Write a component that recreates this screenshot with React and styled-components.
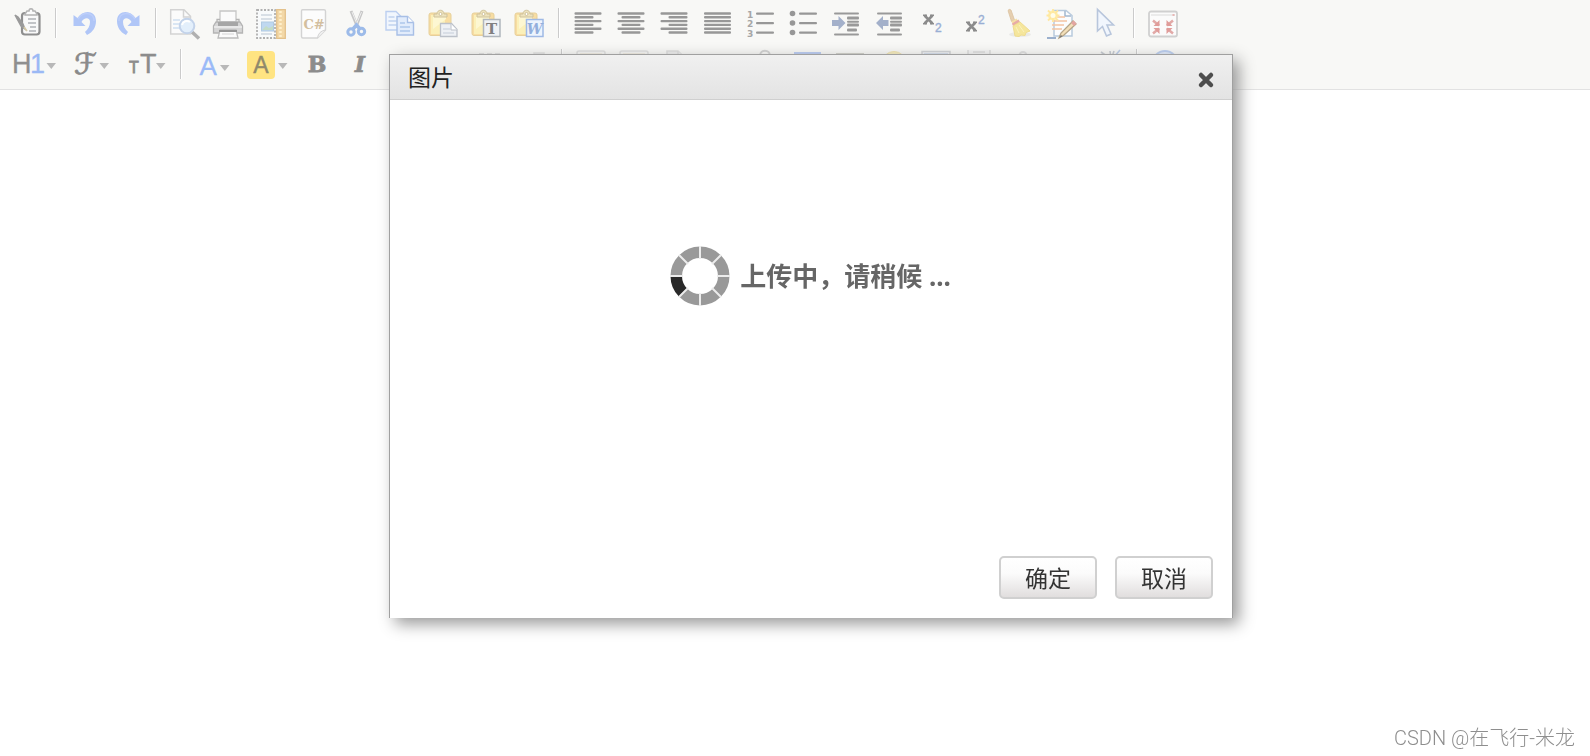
import React, { useState } from "react";
import styled, { createGlobalStyle, css } from "styled-components";

const GlobalStyle = createGlobalStyle`
  * {
    box-sizing: border-box;
  }

  body {
    margin: 0;
    background: #fff;
    font-family: "Noto Sans", "Noto Sans CJK SC", sans-serif;
  }
`;

const EditorBlock = styled.div`
  min-height: 100vh;
  display: flex;
  flex-direction: column;
`;

const Toolbar = styled.div`
  display: flex;
  flex-direction: column;
  gap: 11px;
  padding: 8px 13px 10px;
  background: #f8f8f6;
  border-bottom: 1px solid #e2e2e2;
`;

const ToolRow = styled.div`
  display: flex;
  height: 30px;
`;

const ToolGroup = styled.div`
  display: flex;
  gap: 13px;
`;

const Separator = styled.div`
  width: 2px;
  height: 30px;
  margin: 0 13px 0 12px;
  background: #fff;
  border-left: 1px solid #cbcbcb;

  ${(props) =>
    props.$wide &&
    css`
      margin: 0 13px 0 14px;
    `}
`;

const ToolButton = styled.button`
  display: block;
  height: 30px;
  padding: 0;
  border: 0;
  background: none;
  cursor: pointer;
`;

const Icon = styled.svg`
  display: block;
  overflow: visible;
`;

const EditArea = styled.textarea`
  flex: 1;
  width: 100%;
  padding: 10px;
  border: 0;
  outline: 0;
  resize: none;
  background: #fff;
`;

const Overlay = styled.div`
  position: fixed;
  inset: 0;
  display: flex;
  justify-content: center;
  align-items: flex-start;
  padding: 54px 0 0 32px;
`;

const Dialog = styled.div`
  width: 844px;
  max-width: 100%;
  background: #fff;
  border: 1px solid #a0a0a0;
  border-bottom: 0;
  box-shadow: 6px 6px 15px #999;
`;

const DialogHeader = styled.div`
  display: flex;
  align-items: center;
  justify-content: space-between;
  height: 45px;
  padding: 0 18px;
  background: linear-gradient(#f0f0f0, #e3e3e3);
  border-bottom: 1px solid #cfcfcf;
`;

const DialogTitle = styled.h2`
  margin: 0;
  font-size: 23px;
  line-height: 32px;
  font-weight: 400;
  color: #222;
`;

const CloseButton = styled.button`
  display: block;
  margin-top: 6px;
  padding: 0;
  border: 0;
  background: none;
  cursor: pointer;
`;

const DialogBody = styled.div`
  display: flex;
  justify-content: center;
  height: 456px;
  padding-top: 147px;
`;

const Loading = styled.div`
  display: flex;
  align-items: center;
  gap: 11px;
  height: 58px;
  font-size: 26px;
  font-weight: 700;
  line-height: 36px;
  color: #666;
`;

const DialogFooter = styled.div`
  display: flex;
  justify-content: flex-end;
  gap: 18px;
  padding: 0 19px 19px;
`;

const FooterButton = styled.button`
  width: 98px;
  height: 43px;
  padding: 0;
  border: 2px solid #d0d0d0;
  border-radius: 5px;
  background: linear-gradient(#fff, #fbfbfb 40%, #e1dede);
  font-family: inherit;
  font-size: 23px;
  line-height: 32px;
  color: #333;
  cursor: pointer;
`;

const Watermark = styled.div`
  position: fixed;
  right: 15px;
  bottom: 4px;
  font-family: Roboto, "Noto Sans CJK SC", sans-serif;
  font-size: 20px;
  font-weight: 300;
  line-height: 28px;
  color: #8e8e8e;
`;

const SANS = "Liberation Sans, sans-serif";
const SERIF = "DejaVu Serif, serif";

const Caret = ({ x, y = 14 }) => (
  <path d={`M${x} ${y}h9.5l-4.7 6z`} fill="#b8b8b8" />
);

// horizontal rules of the alignment icons: [x, width] per line
const Lines = ({ rows }) => (
  <g fill="#979797">
    {rows.map(([x, w], i) => (
      <rect key={i} x={x} y={4.3 + i * 3.8} width={w} height="2.4" rx="1" />
    ))}
  </g>
);

const UndoPath = () => (
  <g>
    <path d="M3.500 7v11h12l-4-4C14 9 20 9 20 14c0 4-2 7-5 10l2 3c6-3 9-8 9-14C26 2 13 1 7.500 10z" fill="#b0c6f7" />
    <path d="M8 11C13 3 24 4 24 13" fill="none" stroke="#bccefa" strokeWidth="1.5" />
  </g>
);

const PasteBase = () => (
  <g>
    <rect x="1" y="5" width="22" height="22.500" rx="2" fill="#f8dda2" stroke="#e6d09a" />
    <path d="M3 7h14v19H3z" fill="#fbf0b9" />
    <path d="M5 9l13-2v4L5 21z" fill="#fdf7d2" />
    <path d="M6 9V6h3c0-5 7-5 7 0h3v3z" fill="#eee3bd" stroke="#cfc29c" />
    <circle cx="12.5" cy="6" r="1.5" fill="#fff" stroke="#cfc29c" />
  </g>
);

const IndentLines = () => (
  <g fill="#999">
    <rect x="3" y="4.500" width="25" height="2" rx="1" />
    <rect x="3" y="25.500" width="25" height="2" rx="1" />
    <rect x="16" y="8.5" width="12" height="3" rx="1" />
    <rect x="16" y="12.7" width="12" height="2" rx="1" />
    <rect x="16" y="15.5" width="12" height="3" rx="1" />
    <rect x="16" y="20.5" width="10" height="3" rx="1" />
  </g>
);

const FrameIcon = () => (
  <g fill="#f6f6f4" stroke="#dedede" strokeWidth="1.5">
    <rect x="1" y="2" width="28" height="26" rx="2" />
    <path d="M4 4.500h22v19H4z" fill="#ece5cf" stroke="none" />
  </g>
);

const icons = {
  source: (
    <g fill="none" stroke="#8f8f8f" strokeWidth="2.2">
      <rect x="9" y="5" width="17.5" height="21.5" rx="3" fill="#f9f9f9" />
      <path d="M12 6l2-3h2c0-3 4-3 4 0h2l2 3v1H12z" fill="#fbfbfb" stroke="#b3b3b3" strokeWidth="1.5" />
      <path d="M15 11h8M15 15h8M17 19h6M16 23h7" stroke="#b0b3b6" strokeWidth="1.3" />
      <path d="M2 7l3 2 5 7 2 5-4-3z" fill="#999" stroke="#9a9a9a" strokeWidth="1.5" />
      <path d="M11 19l3 4" stroke="#d5c9a5" strokeWidth="1.5" />
    </g>
  ),
  undo: <UndoPath />,
  redo: (
    <g transform="translate(30 0) scale(-1 1)">
      <UndoPath />
    </g>
  ),
  preview: (
    <g fill="none" stroke="#d3d3d3" strokeWidth="1.5">
      <path d="M.7 1.7H14l6.500 6.500V26H.7z" fill="#fbfbfb" />
      <path d="M13.500 2v7H20" />
      <path d="M3 12h7M3 16h7M3 20h7" stroke="#cfdff1" />
      <path d="M22 24l7 6.5" stroke="#b0b0b0" strokeWidth="3.5" />
      <circle cx="17" cy="18" r="7.3" fill="#e3effb" stroke="#c3d3ea" strokeWidth="2" />
      <path d="M12 17c1-4 5-5 8-3" stroke="#fff" strokeWidth="2" />
    </g>
  ),
  print: (
    <g stroke="#b4b4b4" strokeWidth="1.3">
      <path d="M7 3h16v11H7z" fill="#fbfbfb" stroke="#c6c6c6" />
      <path d="M4 14V11.5h3M23 11.5h3V14" fill="none" />
      <path d="M3 14h24l2.5 4v7H.5v-7z" fill="#d6d6d6" />
      <path d="M5 14h20v4H5z" fill="#a6a6a6" stroke="none" />
      <path d="M1 19h28" stroke="#f2f2f2" />
      <path d="M7 22h16l2 8H5z" fill="#fbfbfb" stroke="#bcbcbc" />
      <path d="M6 23h18" stroke="#959595" strokeWidth="2" />
      <path d="M9 26h12" stroke="#ddd" />
    </g>
  ),
  template: (
    <g fill="none">
      <path d="M1 2h18v28H1z" fill="#f8fafb" stroke="#b0b0b0" strokeWidth="1.800" strokeDasharray="2 1.5" />
      <path d="M5 7h11M5 11h11M5 26h11" stroke="#cdd6e0" strokeWidth="1.3" />
      <rect x="5.5" y="14" width="12" height="9" fill="#bfd8f0" stroke="#b0cae2" />
      <path d="M6 22l4-4 3 2 4-2v4z" fill="#c3dcc7" />
      <path d="M20.7 1.7h8.6v28.6h-8.6z" fill="#f3d8a7" stroke="#e3c18b" strokeWidth="1.3" />
      <path d="M24.5 3v26" stroke="#fff0cc" strokeWidth="2.5" strokeDasharray="2 2" />
    </g>
  ),
  code: (
    <g fill="none">
      <path d="M3.5 1.7H25q1.5 0 1.5 1.5V22l-8 8H4q-1.5 0-1.5-1.5V3q0-1.3 1-1.3z" fill="#fcfcfc" stroke="#d3d3d3" strokeWidth="1.4" />
      <path d="M18.5 30q1-7 8-8" fill="#f1f1f1" stroke="#d3d3d3" />
      <text x="15" y="21" textAnchor="middle" fontFamily={SERIF} fontSize="13" fontWeight="700" fill="#d3bf9f">C#</text>
    </g>
  ),
  cut: (
    <g fill="none">
      <path d="M9 3l6.500 16M20 3l-6 16" stroke="#c6c6c6" strokeWidth="3" />
      <path d="M10 4l5 12M19.500 4l-5 12" stroke="#efefef" strokeWidth="1" />
      <circle cx="9" cy="24" r="3.200" stroke="#9dbbe9" strokeWidth="3" />
      <circle cx="19.500" cy="23.500" r="3.200" stroke="#9dbbe9" strokeWidth="3" />
      <path d="M11 21l3.500-4 3.500 4" stroke="#9dbbe9" strokeWidth="3.500" />
    </g>
  ),
  copy: (
    <g stroke="#bccff0" strokeWidth="1.4">
      <path d="M1 3.500h10l5 5V22H1z" fill="#f1f6fd" />
      <path d="M3.500 9h6M3.500 13h8M3.500 17h8" stroke="#c0d2ee" />
      <path d="M12 8.500h10.500l6 6V27H12z" fill="#e2ecfb" stroke="#a8bfe6" />
      <path d="M22.500 8.500v6h6" fill="#fff" stroke="#a8bfe6" />
      <path d="M15 15h5M15 19h10M15 23h10" stroke="#adc6ec" />
    </g>
  ),
  paste: (
    <g>
      <PasteBase />
      <path d="M12.500 15.500h11l5.500 6v7H12.500z" fill="#eef1f5" stroke="#bcc1c9" strokeWidth="1.3" />
      <path d="M23 16v6h6" fill="#fff" stroke="#bcc1c9" />
      <path d="M15 21h7M15 25h11" stroke="#c5cdd8" />
    </g>
  ),
  plainpaste: (
    <g>
      <PasteBase />
      <path d="M12.500 11.500h16.500v17H12.500z" fill="#eff2f5" stroke="#b0b6bd" strokeWidth="1.5" />
      <text x="20.500" y="25.500" textAnchor="middle" fontFamily={SERIF} fontSize="15" fontWeight="700" fill="#808080">T</text>
    </g>
  ),
  wordpaste: (
    <g>
      <PasteBase />
      <path d="M12.500 11.500h16.500v17H12.500z" fill="#edf4fd" stroke="#9fb9e5" strokeWidth="1.5" />
      <text x="20.500" y="25.500" textAnchor="middle" fontFamily={SERIF} fontSize="14" fontWeight="700" fontStyle="italic" fill="#93afdc">W</text>
    </g>
  ),
  justifyleft: <Lines rows={[[1.5, 27], [1.5, 19], [1.5, 27], [1.5, 19], [1.5, 27], [1.5, 19]]} />,
  justifycenter: <Lines rows={[[1.5, 27], [5.5, 19], [1.5, 27], [5.5, 19], [1.5, 27], [5.5, 19]]} />,
  justifyright: <Lines rows={[[1.5, 27], [9.5, 19], [1.5, 27], [9.5, 19], [1.5, 27], [9.5, 19]]} />,
  justifyfull: <Lines rows={[[2, 27], [2, 27], [2, 27], [2, 27], [2, 27], [2, 27]]} />,
  ol: (
    <g fill="#979797">
      <g fontFamily="DejaVu Sans, sans-serif" fontSize="9" fontWeight="700" fill="#a6a6a6">
        <text x="2" y="10">1</text>
        <text x="2" y="19">2</text>
        <text x="2" y="28.500">3</text>
      </g>
      <rect x="11" y="4.500" width="18" height="2.2" rx="1" />
      <rect x="11" y="14" width="18" height="2.2" rx="1" />
      <rect x="11" y="23.500" width="18" height="2.2" rx="1" />
    </g>
  ),
  ul: (
    <g fill="#979797">
      <circle cx="4.5" cy="5.5" r="2.8" />
      <circle cx="4.5" cy="15" r="2.8" />
      <circle cx="4.5" cy="24.5" r="2.8" />
      <rect x="11" y="4.500" width="18" height="2.2" rx="1" />
      <rect x="11" y="14" width="18" height="2.2" rx="1" />
      <rect x="11" y="23.500" width="18" height="2.2" rx="1" />
    </g>
  ),
  indent: (
    <g>
      <IndentLines />
      <path d="M1 12h6.500V8l7 7-7 7v-4H1z" fill="#a3b0ca" />
    </g>
  ),
  outdent: (
    <g>
      <IndentLines />
      <path d="M14.500 12H9V8l-7 7 7 7v-4h5.500z" fill="#a3b0ca" />
    </g>
  ),
  subscript: (
    <g fill="none" stroke="#8c8c8c">
      <path d="M7.500 7.500l8 8M15.500 7.500l-8 8" strokeWidth="2.6" />
      <path d="M6 7.300h4M13 7.300h4M6 15.700h4M13 15.700h4" strokeWidth="1.6" />
      <text x="18" y="24" fontFamily={SANS} fontSize="12" fill="#9aafd4" stroke="#9aafd4" strokeWidth=".4">2</text>
    </g>
  ),
  superscript: (
    <g fill="none" stroke="#8c8c8c">
      <path d="M7.500 14.500l8 8M15.500 14.500l-8 8" strokeWidth="2.6" />
      <path d="M6 14.300h4M13 14.300h4M6 22.700h4M13 22.700h4" strokeWidth="1.6" />
      <text x="18" y="16" fontFamily={SANS} fontSize="12" fill="#9aafd4" stroke="#9aafd4" strokeWidth=".4">2</text>
    </g>
  ),
  removeformat: (
    <g>
      <ellipse cx="17" cy="26.500" rx="11" ry="2.5" fill="#eaeae8" />
      <path d="M5 2.500q1-2 3-.5l3.500 10-3 1.5z" fill="#e6cfb0" stroke="#dbc19e" strokeWidth=".8" />
      <path d="M8.500 13.500l5-3 3 4.500-6 3.500z" fill="#f5e0a6" />
      <path d="M9 15.500l6.500-4 1.500 2.500-7 4z" fill="#e8aca7" />
      <path d="M10 18l7-4 10 9-4 1.500-1 3-4-.5-2 1.500-4-.5z" fill="#f5e69c" stroke="#efdc90" />
      <path d="M13 19l3 6M16 17l5 7" stroke="#fbf2bd" />
    </g>
  ),
  quickformat: (
    <g fill="none">
      <path d="M8 2.500h12l6 5V28H8z" fill="#fcfdfe" stroke="#b8cadd" strokeWidth="1.5" />
      <path d="M19 3v5h6" stroke="#a2b8cf" strokeWidth="1.5" />
      <path d="M6 13h15M6 17h12M6 21h10M9 9h10" stroke="#f3c3a2" strokeWidth="1.3" />
      <path d="M1 30h9" stroke="#9bb0cd" strokeWidth="2" />
      <circle cx="7" cy="7.5" r="5" fill="#fff0a6" />
      <path d="M7 1v13M.5 7.500h13M2 2.500l10 10M12 2.500l-10 10" stroke="#ffe7a0" strokeWidth="1.8" />
      <circle cx="7" cy="7.5" r="2.5" fill="#fffde9" />
      <path d="M13 30l2-5 12-12 3 3-12 11z" fill="#f3dfb8" stroke="#b5a587" strokeWidth="1.3" />
      <path d="M25 15l2.500-2.500 3 3L28 18z" fill="#e4a5a1" />
      <path d="M13 30l2-3 1.500 1.500z" fill="#777" />
    </g>
  ),
  selectall: (
    <path d="M8.500 1.500V23l5-4.500 4 9.500 4.500-2-4-9h6.500z" fill="#f1f6fd" stroke="#b8c6dc" strokeWidth="1.6" />
  ),
  fullscreen: (
    <g fill="none">
      <rect x="1" y="3.5" width="28" height="25" rx="2" fill="#fbfbfb" stroke="#d0d0d0" strokeWidth="1.8" />
      <path d="M3 7h24" stroke="#ebebeb" strokeWidth="2" />
      <path d="M24.500 7h2" stroke="#e8a6a3" strokeWidth="1.5" />
      <path d="M5 12.500l6 5M25 12.500l-6 5M5 25.500l6-5M25 25.500l-6-5" stroke="#e2a9a7" strokeWidth="2.5" />
      <path d="M11.500 12v6H5.500zM18.500 12v6h6zM11.500 26v-6h-6zM18.500 26v-6h6z" fill="#e09c9a" />
    </g>
  ),
  formatblock: (
    <g fontFamily={SANS} fontSize="27" strokeWidth=".3">
      <text x="-1" y="24" fill="#8f8f8f" stroke="#8f8f8f">H</text>
      <text x="17" y="24" fill="#9bb9f5" stroke="#9bb9f5">1</text>
      <Caret x={33.5} />
    </g>
  ),
  fontname: (
    <g>
      <text x="5" y="25" fontFamily="DejaVu Sans, sans-serif" fontSize="29" fill="#8a8a8a" stroke="#8a8a8a" strokeWidth=".8">ℱ</text>
      <Caret x={30.5} />
    </g>
  ),
  fontsize: (
    <g fontFamily={SANS} fill="#8c8c8c" stroke="#8c8c8c">
      <text x="4" y="24" fontSize="16" strokeWidth=".8">T</text>
      <text x="15" y="24" fontSize="27" strokeWidth=".4">T</text>
      <g stroke="none">
        <Caret x={31} />
      </g>
    </g>
  ),
  forecolor: (
    <g>
      <text x="4.500" y="26" fontFamily={SANS} fontSize="26" fill="#9bbaf8" stroke="#9bbaf8" strokeWidth=".3">A</text>
      <Caret x={25} y={16} />
    </g>
  ),
  hilitecolor: (
    <g>
      <rect x="1" y="2" width="28" height="28" rx="4" fill="#ffe482" />
      <text x="15" y="24" textAnchor="middle" fontFamily={SANS} fontSize="23" fill="#918a6c" stroke="#918a6c" strokeWidth=".4">A</text>
      <Caret x={32} />
    </g>
  ),
  bold: (
    <text x="15" y="23" textAnchor="middle" fontFamily={SERIF} fontSize="22" fontWeight="700" fill="#8c8c8c" stroke="#8c8c8c" strokeWidth=".8">B</text>
  ),
  italic: (
    <text x="15" y="23" textAnchor="middle" fontFamily={SERIF} fontSize="22" fontWeight="700" fontStyle="italic" fill="#8c8c8c" stroke="#8c8c8c" strokeWidth=".6">I</text>
  ),
  underline: <path d="M8 8v9q0 5 7 5t7-5V8M7 26h16" fill="none" stroke="#8d8d8d" strokeWidth="2.5" />,
  strikethrough: <path d="M21 10q-6-4-11 0 0 4 5 5t6 6q-6 5-12 0M5 15h20" fill="none" stroke="#8d8d8d" strokeWidth="2.5" />,
  lineheight: <path d="M5 5h24M5 11h24M5 17h24M5 23h24" stroke="#e0e0e0" strokeWidth="2" strokeDasharray="5 3" />,
  clearhtml: <path d="M17 4h10v20H17z" fill="#ececec" stroke="#e0e0e0" strokeWidth="1.5" />,
  image: <FrameIcon />,
  multiimage: <FrameIcon />,
  flash: (
    <g fill="#ececec" stroke="#dcdcdc" strokeWidth="1.5">
      <path d="M5 2h11l7 7v19H5z" />
      <path d="M16 2v7h7" />
    </g>
  ),
  media: <path d="M7 8l16 7-16 8z" fill="#b7c9e8" />,
  insertfile: <path d="M12 22V7c0-7 10-7 10 0v15c0 8-14 8-14 0V10" fill="none" stroke="#d0d0d0" strokeWidth="2" />,
  table: (
    <g>
      <path d="M3 3h27v24H3z" fill="#f3f6fc" />
      <path d="M3 3h27v6H3z" fill="#b6c9f3" />
      <path d="M3 15h27M3 21h27M12 9v18M21 9v18" stroke="#adc3f2" />
    </g>
  ),
  hr: <path d="M2 5h28M2 15h28M2 25h28" stroke="#cfcfc7" strokeWidth="2" />,
  emoticons: (
    <g>
      <circle cx="17" cy="14.500" r="12" fill="#f7ecbb" stroke="#f0e2ab" />
      <path d="M12 17q6 6 12 0" fill="none" stroke="#b39c53" strokeWidth="1.5" />
    </g>
  ),
  baidumap: (
    <g fill="#f0f3f7" stroke="#cfd1d4" strokeWidth="1.5">
      <path d="M2 2.500h28v26H2z" />
      <path d="M4 5h24" stroke="#cbd7ea" />
    </g>
  ),
  pagebreak: <path d="M5 1v27h22V1M10 3h12" fill="#f3f3f3" stroke="#dadada" strokeWidth="1.5" />,
  anchor: <path d="M17 6v21M8 20q9 12 18 0M12 11h10M17 10a3.500 3.500 0 110-7 3.500 3.500 0 010 7" fill="none" stroke="#dedede" strokeWidth="2" />,
  link: <path d="M5 12h20M5 18h20" stroke="#c2cfe3" strokeWidth="3" />,
  unlink: (
    <g fill="none" strokeWidth="1.600">
      <path d="M9 3l7 5M18 2l1 7M22 2l-2 6" stroke="#c2c7cf" />
      <path d="M28 1l-6 7M7 18h8M20 18h8" stroke="#b9cbe8" />
    </g>
  ),
  about: (
    <g>
      <circle cx="14" cy="14.500" r="12.5" fill="#dfe9fa" stroke="#b9cdf0" strokeWidth="2" />
      <text x="14" y="22" textAnchor="middle" fontFamily={SERIF} fontSize="20" fontWeight="700" fill="#8fade0">?</text>
    </g>
  ),
};

// "|" starts a new group, "||" does so with the wider separator
const rows = [
  "source | undo redo | preview print template code cut copy paste plainpaste wordpaste || justifyleft justifycenter justifyright justifyfull ol ul indent outdent subscript superscript removeformat quickformat selectall || fullscreen",
  "formatblock fontname fontsize | forecolor hilitecolor bold italic underline strikethrough lineheight clearhtml || image multiimage flash media insertfile table hr emoticons baidumap pagebreak anchor link unlink || about",
];

const widths = {
  formatblock: 43,
  fontname: 43,
  fontsize: 43,
  forecolor: 38,
  hilitecolor: 43,
};

const parts = (row) => row.split(/\s(?=\|)|(?<=\|)\s/);

const Spinner = () => {
  const segments = [0, 1, 2, 3, 4, 5, 6, 7];

  return (
    <Icon width="58" height="58" viewBox="-29 -29 58 58" aria-hidden="true">
      {segments.map((i) => (
        <path
          key={i}
          d="M0 -29.500A29.500 29.500 0 0 1 20.860 -20.860L12.730 -12.730A18 18 0 0 0 0 -18z"
          transform={`rotate(${i * 45})`}
          fill={i === 5 ? "#292929" : "#999"}
        />
      ))}
      <path
        d="M0 -30V-17M0 30V17M-30 0H-17M30 0H17M-21 -21L-12 -12M21 -21L12 -12M-21 21L-12 12M21 21L12 12"
        stroke="#ececec"
        strokeWidth="2"
      />
    </Icon>
  );
};

const App = () => {
  const [open, setOpen] = useState(true);

  const close = () => setOpen(false);

  return (
    <EditorBlock>
      <GlobalStyle />
      <Toolbar role="toolbar">
        {rows.map((row) => (
          <ToolRow key={row}>
            {parts(row).map((part, i) =>
              part.startsWith("|") ? (
                <Separator key={i} $wide={part === "||"} />
              ) : (
                <ToolGroup key={i}>
                  {part.split(" ").map((name) => (
                    <ToolButton key={name} type="button" aria-label={name}>
                      <Icon width={widths[name] || 30} height="30">
                        {icons[name]}
                      </Icon>
                    </ToolButton>
                  ))}
                </ToolGroup>
              )
            )}
          </ToolRow>
        ))}
      </Toolbar>
      <EditArea aria-label="content" />

      {open && (
        <Overlay>
          <Dialog role="dialog" aria-labelledby="dialog-title">
            <DialogHeader>
              <DialogTitle id="dialog-title">图片</DialogTitle>
              <CloseButton type="button" aria-label="close" onClick={close}>
                <Icon width="16" height="16">
                  <path d="M3 3l10 10M13 3L3 13" stroke="#4d4d4d" strokeWidth="4.5" strokeLinecap="round" />
                </Icon>
              </CloseButton>
            </DialogHeader>
            <DialogBody>
              <Loading role="status">
                <Spinner />
                <span>上传中，请稍候 ...</span>
              </Loading>
            </DialogBody>
            <DialogFooter>
              <FooterButton type="button" onClick={close}>
                确定
              </FooterButton>
              <FooterButton type="button" onClick={close}>
                取消
              </FooterButton>
            </DialogFooter>
          </Dialog>
        </Overlay>
      )}

      <Watermark>CSDN @在飞行-米龙</Watermark>
    </EditorBlock>
  );
};

export default App;
